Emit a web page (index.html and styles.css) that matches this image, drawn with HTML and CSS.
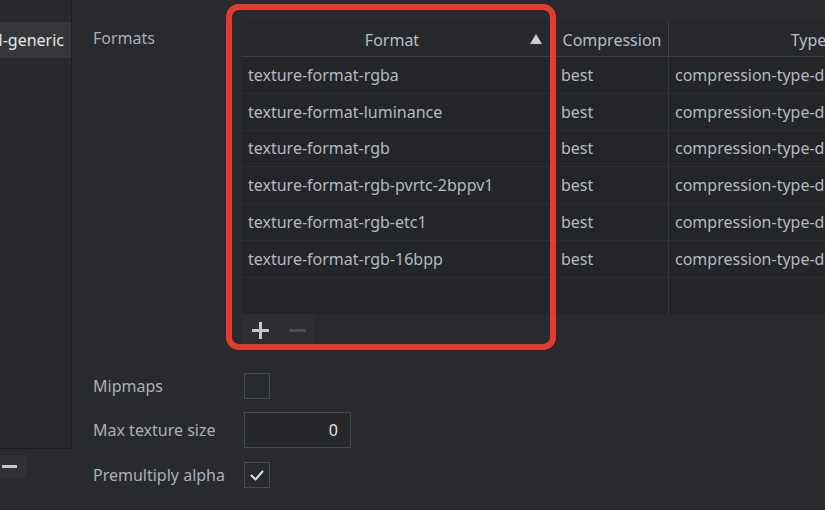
FILE: index.html
```html
<!DOCTYPE html>
<html>
<head>
<meta charset="utf-8">
<link rel="stylesheet" href="styles.css">
</head>
<body>
<div class="app">
  <aside class="sidebar">
    <div class="list">
      <div class="item selected"><span>l-generic</span></div>
    </div>
    <div class="list-tools">
      <span class="tool-btn"><svg width="27" height="23" viewBox="0 0 27 23"><rect x="2" y="10" width="15" height="3" fill="#c4c6c9"/></svg></span>
    </div>
  </aside>
  <main class="props">
    <div class="field formats-field">
      <div class="label">Formats</div>
      <div class="table-wrap">
        <div class="table">
          <div class="trow thead">
            <div class="cell hcell first"><span class="htext">Format</span><svg class="sort" width="12" height="10" viewBox="0 0 12 10"><polygon points="6,0 12,10 0,10" fill="#c9cdd1"/></svg></div>
            <div class="cell hcell">Compression</div>
            <div class="cell hcell">Type</div>
          </div>
          <div class="trow"><div class="cell">texture-format-rgba</div><div class="cell">best</div><div class="cell">compression-type-default</div></div>
          <div class="trow"><div class="cell">texture-format-luminance</div><div class="cell">best</div><div class="cell">compression-type-default</div></div>
          <div class="trow"><div class="cell">texture-format-rgb</div><div class="cell">best</div><div class="cell">compression-type-default</div></div>
          <div class="trow"><div class="cell">texture-format-rgb-pvrtc-2bppv1</div><div class="cell">best</div><div class="cell">compression-type-default</div></div>
          <div class="trow"><div class="cell">texture-format-rgb-etc1</div><div class="cell">best</div><div class="cell">compression-type-default</div></div>
          <div class="trow"><div class="cell">texture-format-rgb-16bpp</div><div class="cell">best</div><div class="cell">compression-type-default</div></div>
          <div class="trow filler"><div class="cell"></div><div class="cell"></div><div class="cell"></div></div>
        </div>
        <div class="table-tools">
          <span class="tbtn"><svg width="36" height="32" viewBox="0 0 36 32"><rect x="10" y="15" width="17" height="3" fill="#c3c6ca"/><rect x="17" y="8" width="3" height="17" fill="#c3c6ca"/></svg></span>
          <span class="tbtn"><svg width="36" height="32" viewBox="0 0 36 32"><rect x="10" y="15" width="17" height="3" fill="#4b4e52"/></svg></span>
        </div>
        <div class="annot"></div>
      </div>
    </div>
    <div class="field mip">
      <div class="label">Mipmaps</div>
      <div class="check"></div>
    </div>
    <div class="field maxsize">
      <div class="label">Max texture size</div>
      <div class="input">0</div>
    </div>
    <div class="field premul">
      <div class="label">Premultiply alpha</div>
      <div class="check"><svg width="24" height="24" viewBox="0 0 24 24"><path d="M6.5 12.5 L10.5 16.5 L17.5 8.5" fill="none" stroke="#d4d6d9" stroke-width="2.2" stroke-linecap="round" stroke-linejoin="round"/></svg></div>
    </div>
  </main>
</div>
</body>
</html>
```

FILE: styles.css
```css
html, body {
  margin: 0;
  padding: 0;
}
body {
  width: 825px;
  height: 510px;
  overflow: hidden;
  background: #292a2e;
  font-family: "Noto Sans", "Open Sans", sans-serif;
  font-size: 16px;
  color: #b2b8bf;
}
.app {
  display: flex;
  height: 510px;
}
.sidebar {
  width: 72px;
  flex: none;
  display: flex;
  flex-direction: column;
}
.list {
  height: 449px;
  box-sizing: border-box;
  border-right: 1px solid #1d1e21;
  border-bottom: 1px solid #1d1e21;
  background: #27292c;
  padding-top: 22px;
}
.item {
  height: 36px;
  display: flex;
  justify-content: flex-end;
  align-items: center;
  overflow: hidden;
  white-space: nowrap;
  padding-right: 7px;
  color: #e6e7e9;
}
.item.selected {
  background: #35373b;
}
.list-tools {
  margin-top: 6px;
  display: flex;
}
.tool-btn {
  width: 27px;
  height: 23px;
  background: #2e3033;
  display: block;
}
.tool-btn svg, .tbtn svg, .check svg {
  display: block;
}
.props {
  flex: 1;
  min-width: 0;
  overflow: hidden;
  padding: 21px 0 0 21px;
}
.field {
  display: flex;
  align-items: center;
}
.label {
  width: 150px;
  flex: none;
  line-height: 20px;
  color: #aab0b7;
  white-space: nowrap;
}
.formats-field {
  align-items: flex-start;
}
.formats-field .label {
  padding-top: 7px;
}
.table-wrap {
  position: relative;
  margin-left: -1px;
}
.table {
  width: 707px;
  background: #232528;
}
.trow {
  display: grid;
  grid-template-columns: 314px 113px 280px;
  height: 36.8px;
  box-sizing: border-box;
  border-bottom: 1px solid #2c2e32;
}
.thead {
  height: 36px;
  background: #26282b;
  border-bottom: 1px solid #393c40;
}
.cell {
  display: flex;
  align-items: center;
  padding-left: 6px;
  border-right: 1px solid #35383c;
  white-space: nowrap;
  overflow: hidden;
  color: #b4bac1;
}
.cell:nth-child(2) {
  padding-left: 5px;
}
.hcell {
  justify-content: center;
  padding-left: 0;
  padding-top: 2px;
  color: #b8bec5;
  border-right-color: #3c3f43;
}
.hcell:nth-child(2) {
  padding-left: 0;
}
.hcell.first {
  padding-left: 12px;
}
.htext {
  flex: 1;
  text-align: center;
}
.sort {
  flex: none;
  margin-right: 13px;
  margin-top: -2px;
}
.trow.filler {
  height: 36.2px;
  border-bottom: none;
}
.table-tools {
  display: flex;
  gap: 1px;
}
.tbtn {
  width: 36px;
  height: 32px;
  background: #2c2e32;
}
.annot {
  position: absolute;
  left: -16px;
  top: -17px;
  width: 330px;
  height: 346px;
  box-sizing: border-box;
  border: 6px solid #e43b2f;
  border-radius: 13px;
  pointer-events: none;
}
.check {
  width: 26px;
  height: 26px;
  box-sizing: border-box;
  border: 1px solid #46494d;
  margin-left: 1px;
}
.mip {
  margin-top: 27px;
}
.maxsize {
  margin-top: 13px;
}
.premul {
  margin-top: 14px;
}
.input {
  width: 107px;
  height: 36px;
  box-sizing: border-box;
  border: 1px solid #46494d;
  background: #25272a;
  margin-left: 1px;
  text-align: right;
  padding-right: 12px;
  line-height: 34px;
  color: #e2e3e5;
}
```
